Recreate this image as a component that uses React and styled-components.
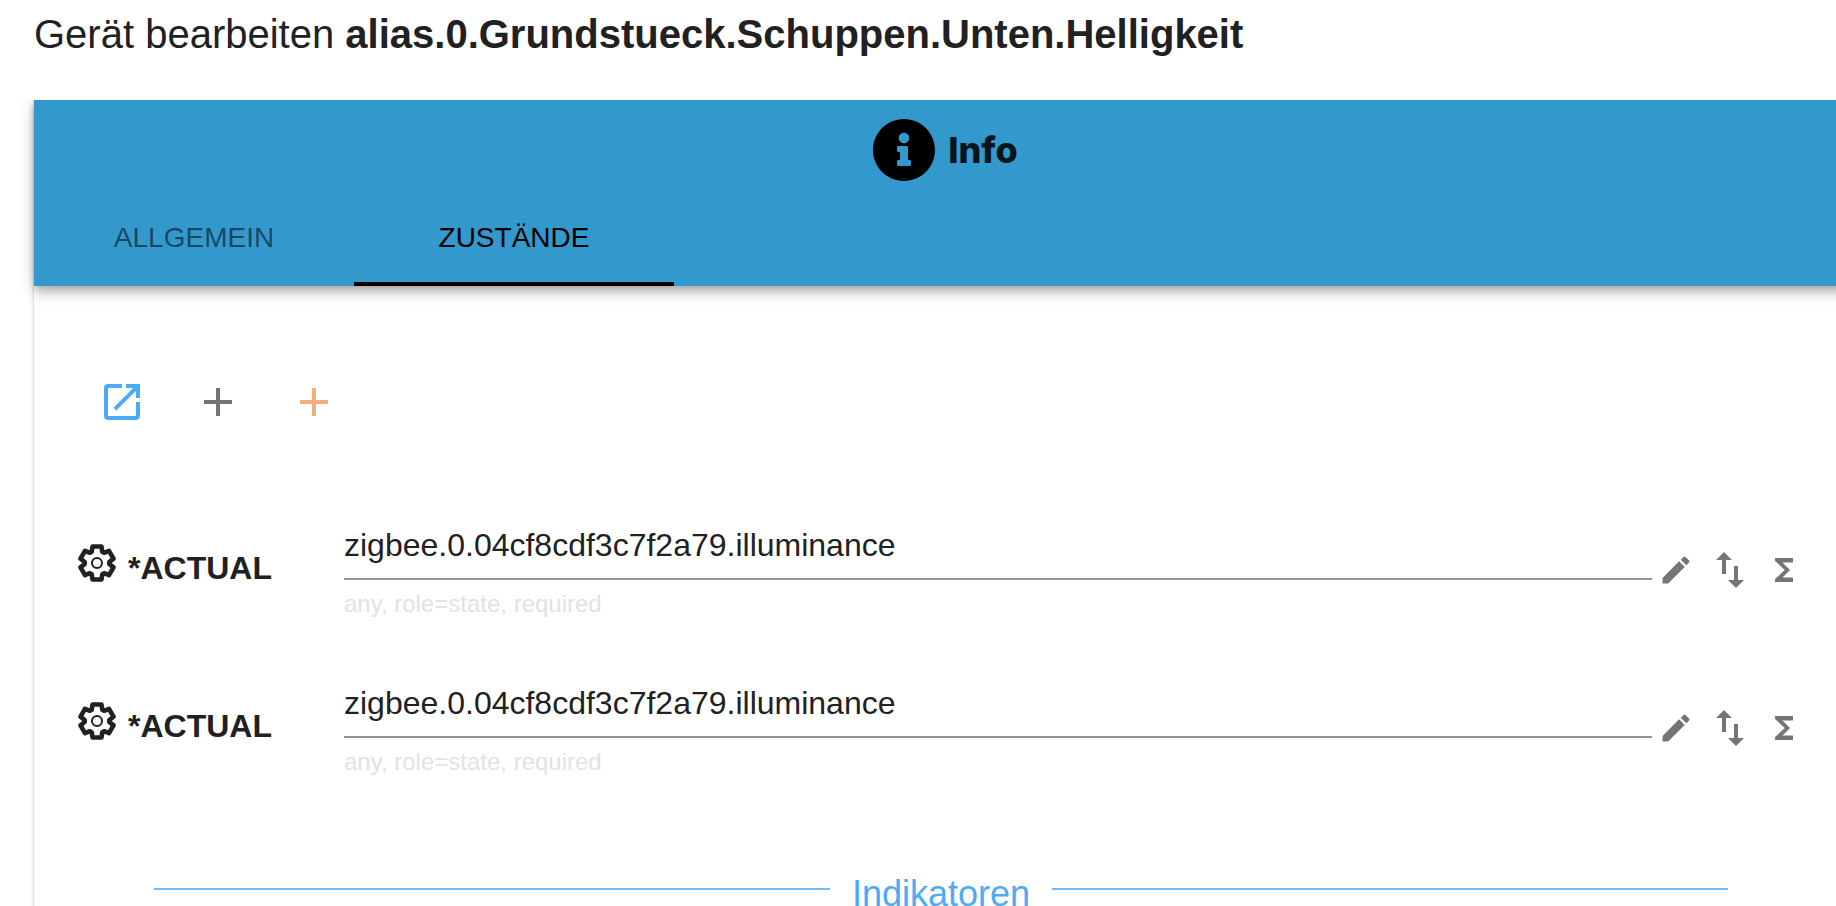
import { useState } from 'react'
import styled, { createGlobalStyle } from 'styled-components'
import { FaInfoCircle } from 'react-icons/fa'
import { MdOpenInNew, MdAdd, MdEdit, MdImportExport, MdFunctions } from 'react-icons/md'

const GlobalStyle = createGlobalStyle`
    * {
        box-sizing: border-box;
    }
    body {
        margin: 0;
        background: #fff;
        color: #212121;
        font-family: "Liberation Sans", Arial, sans-serif;
        overflow: hidden;
    }
`

const Page = styled.main`
    height: 100vh;
    overflow: hidden;
    padding-left: 34px;
`

const Title = styled.h1`
    margin: 0;
    height: 100px;
    padding-top: 2px;
    font-size: 40px;
    line-height: 64px;
    font-weight: 400;
    white-space: nowrap;
`

/* the dialog is a little wider than the window and runs out on the right */
const Panel = styled.section`
    margin-right: -20px;
    min-height: 100vh;
    background: #fff;
    box-shadow: 0 2px 2px rgba(0, 0, 0, 0.14), 0 0 6px rgba(0, 0, 0, 0.16);
    clip-path: inset(0 0 0 -16px);
`

const Header = styled.header`
    background: #3399cc;
    box-shadow: 0 4px 8px -2px rgba(0, 0, 0, 0.2), 0 8px 10px rgba(0, 0, 0, 0.14), 0 2px 20px rgba(0, 0, 0, 0.12);
`

const DeviceType = styled.div`
    display: flex;
    align-items: center;
    justify-content: center;
    gap: 12px;
    height: 90px;
    padding-top: 10px;
    font-family: Inter, sans-serif;
    font-size: 36px;
    font-weight: 800;
    color: #08151c;

    svg {
        color: #000;
    }
`

const Tabs = styled.div`
    display: flex;
`

const Tab = styled.button`
    width: 320px;
    height: 96px;
    padding: 4px 0 0;
    border: 0;
    border-bottom: 4px solid ${(props) => (props.$active ? '#000' : 'transparent')};
    background: none;
    color: ${(props) => (props.$active ? '#000' : 'rgba(0, 0, 0, 0.54)')};
    font-family: inherit;
    font-size: 28px;
    text-transform: uppercase;
    cursor: pointer;
`

const Content = styled.div`
    padding: 68px 48px 0 40px;
`

const Toolbar = styled.div`
    display: flex;
    margin-bottom: 72px;
`

const IconButton = styled.button`
    display: flex;
    align-items: center;
    justify-content: center;
    flex: none;
    width: ${(props) => props.$size}px;
    height: ${(props) => props.$size}px;
    padding: 0;
    border: 0;
    background: none;
    color: ${(props) => props.$color || '#757575'};
    cursor: pointer;
`

const StateRow = styled.div`
    display: flex;
    height: 158px;
`

const StateLabel = styled.label`
    display: flex;
    gap: 12px;
    width: 270px;
    padding: 22px 0 0 4px;
    font-size: 32px;
    line-height: 48px;
    font-weight: 700;
`

const Field = styled.div`
    flex: 1;
    display: flex;
    flex-direction: column;
`

const StateInput = styled.input`
    width: 100%;
    height: 58px;
    padding: 0 0 10px;
    border: 0;
    border-bottom: 2px solid #949494;
    outline: 0;
    background: none;
    color: #212121;
    font-family: inherit;
    font-size: 32px;
`

const Helper = styled.span`
    padding-top: 8px;
    font-size: 24px;
    line-height: 32px;
    color: #e2e2e2;
`

const Actions = styled.div`
    display: flex;
    gap: 6px;
    padding-top: 24px;
`

const Divider = styled.div`
    display: flex;
    gap: 22px;
    margin: 36px 80px 0;
`

const Line = styled.hr`
    flex: 1;
    height: 2px;
    margin: 14px 0 0;
    border: 0;
    background: #70bbf8;
`

const DividerText = styled.h2`
    margin: 0;
    font-size: 36px;
    line-height: 40px;
    font-weight: 400;
    color: #4dabf5;
`

function GearIcon() {
    return (
        <svg width="38" height="38" viewBox="-19 -19 38 38" fill="none" stroke="#212121">
            <path
                strokeWidth="4.6"
                strokeLinejoin="round"
                d="M-5.3-11.2L-4.5-16.5H4.5L5.3-11.2L7.1-10.2L12-12.2L16.5-4.4L12.3-1V1L16.5 4.4L12 12.2L7.1 10.2L5.3 11.2L4.5 16.5H-4.5L-5.3 11.2L-7.1 10.2L-12 12.2L-16.5 4.4L-12.3 1V-1L-16.5-4.4L-12-12.2L-7.1-10.2Z"
            />
            <circle r="5" strokeWidth="2" />
        </svg>
    )
}

const tabs = ['Allgemein', 'Zustände']

const initialStates = [
    { id: 'actual-1', name: '*ACTUAL', value: 'zigbee.0.04cf8cdf3c7f2a79.illuminance', helper: 'any, role=state, required' },
    { id: 'actual-2', name: '*ACTUAL', value: 'zigbee.0.04cf8cdf3c7f2a79.illuminance', helper: 'any, role=state, required' },
]

function StateItem({ item, onChange }) {
    return (
        <StateRow>
            <StateLabel htmlFor={item.id}>
                <GearIcon />
                <span>{item.name}</span>
            </StateLabel>
            <Field>
                <StateInput id={item.id} value={item.value} onChange={(e) => onChange(item.id, e.target.value)} />
                <Helper>{item.helper}</Helper>
            </Field>
            <Actions>
                <IconButton $size={48} aria-label="Bearbeiten"><MdEdit size={36} /></IconButton>
                <IconButton $size={48} aria-label="Lesen und Schreiben"><MdImportExport size={48} /></IconButton>
                <IconButton $size={48} aria-label="Funktion"><MdFunctions size={36} /></IconButton>
            </Actions>
        </StateRow>
    )
}

export default function App() {
    const [active, setActive] = useState('Zustände')
    const [states, setStates] = useState(initialStates)

    function changeState(id, value) {
        setStates(states.map((item) => (item.id === id ? { ...item, value } : item)))
    }

    return (
        <>
            <GlobalStyle />
            <Page>
                <Title>Gerät bearbeiten <b>alias.0.Grundstueck.Schuppen.Unten.Helligkeit</b></Title>
                <Panel>
                    <Header>
                        <DeviceType>
                            <FaInfoCircle size={64} />
                            <span>Info</span>
                        </DeviceType>
                        <Tabs role="tablist">
                            {tabs.map((tab) => (
                                <Tab key={tab} role="tab" aria-selected={tab === active} $active={tab === active} onClick={() => setActive(tab)}>
                                    {tab}
                                </Tab>
                            ))}
                        </Tabs>
                    </Header>
                    <Content>
                        <Toolbar>
                            <IconButton $size={96} $color="#4dabf5" aria-label="Öffnen"><MdOpenInNew size={48} /></IconButton>
                            <IconButton $size={96} aria-label="Zustand hinzufügen"><MdAdd size={48} /></IconButton>
                            <IconButton $size={96} $color="#f1ae7b" aria-label="Indikator hinzufügen"><MdAdd size={48} /></IconButton>
                        </Toolbar>
                        {states.map((item) => (
                            <StateItem key={item.id} item={item} onChange={changeState} />
                        ))}
                        <Divider>
                            <Line />
                            <DividerText>Indikatoren</DividerText>
                            <Line />
                        </Divider>
                    </Content>
                </Panel>
            </Page>
        </>
    )
}
